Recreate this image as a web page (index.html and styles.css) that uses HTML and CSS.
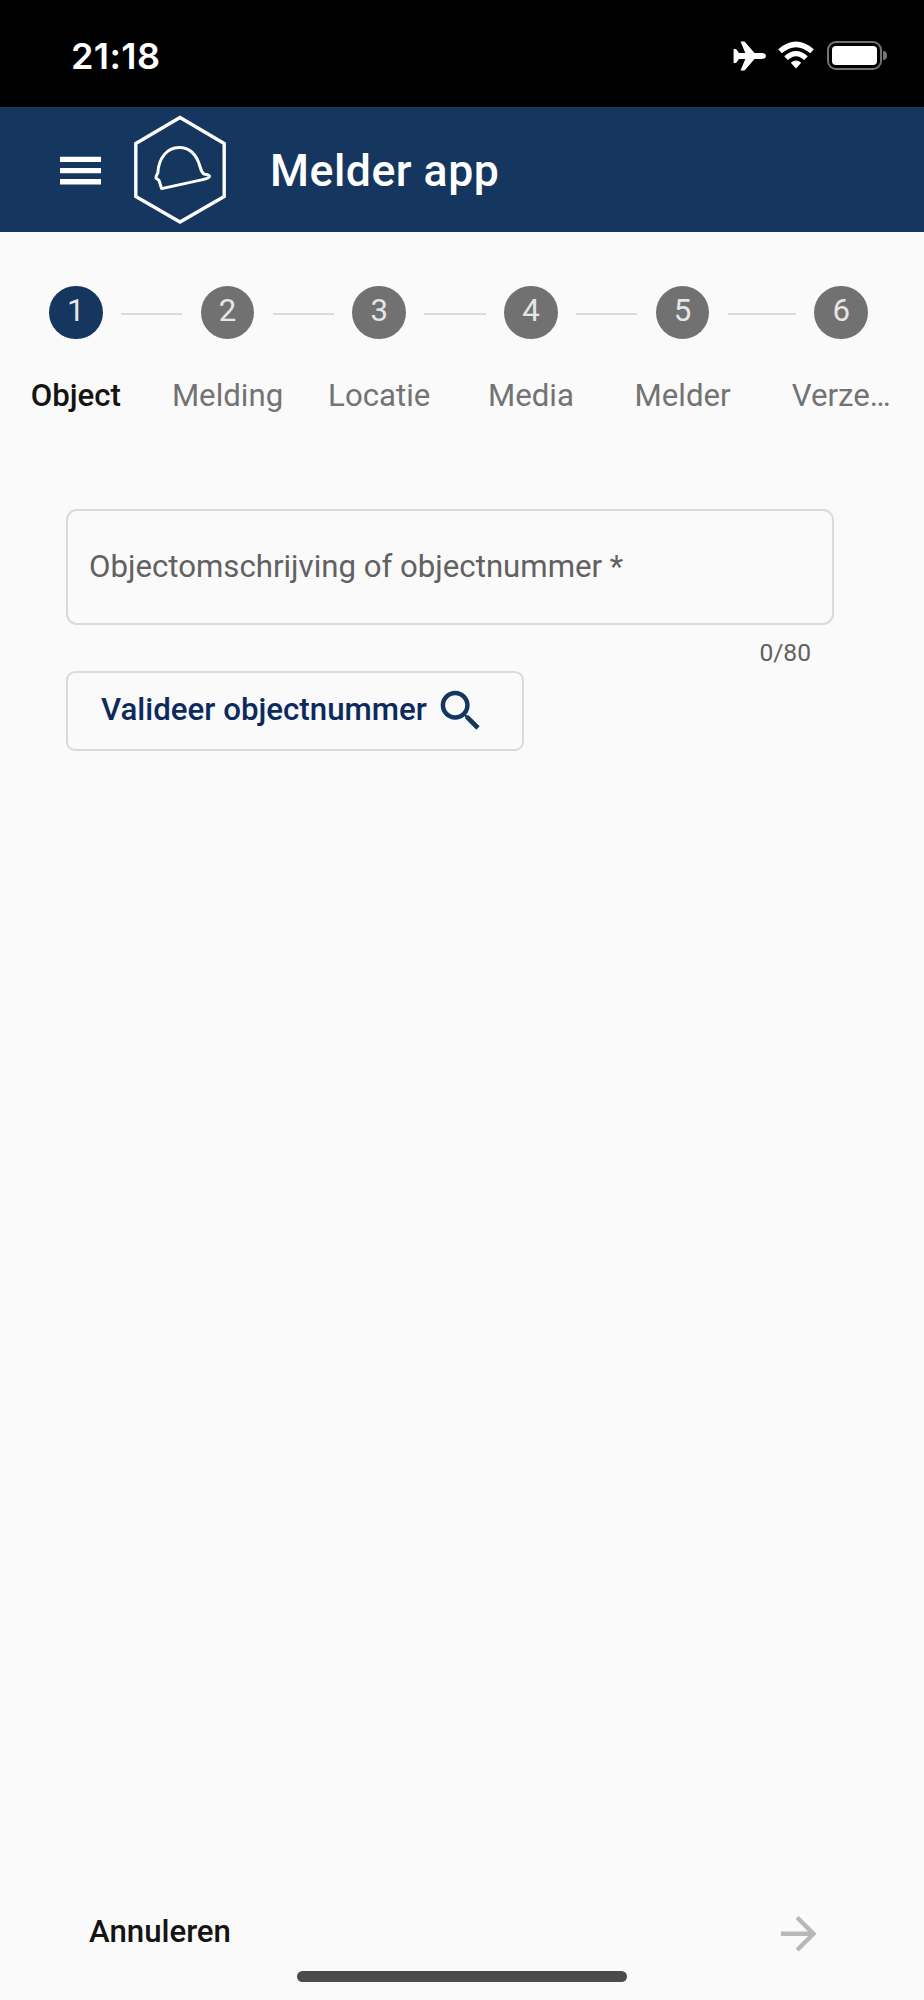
FILE: index.html
```html
<!DOCTYPE html>
<html lang="nl">
<head>
    <meta charset="UTF-8">
    <title>Melder app</title>
    <link rel="stylesheet" href="styles.css">
</head>
<body>
<div class="statusbar">
    <span class="time">21:18</span>
    <div class="status-icons">
        <svg class="plane" viewBox="0 0 34 30"><path d="M33 15c0-2-2-3-5-3h-6.500L12.500 1.500C12 1 11.500.6 10.800.6H7.500L12.300 12H6L3 8H.6v14H3l3-4h6.300L7.500 29.400h3.300c.7 0 1.200-.4 1.700-.9L21.500 18H28c3 0 5-1 5-3z"/></svg>
        <svg class="wifi" viewBox="0 0 36 28">
            <path d="M2 10.300Q18-3.500 34 10.300" fill="none" stroke="#fff" stroke-width="5.400"/>
            <path d="M8 17.200Q18 8 28 17.200" fill="none" stroke="#fff" stroke-width="5.200"/>
            <path d="M12.800 21.700Q18 17.400 23.200 21.700L18 27.500z"/>
        </svg>
        <div class="battery"><div class="level"></div></div>
        <div class="battery-tip"></div>
    </div>
</div>

<div class="header">
    <svg class="menu" viewBox="0 0 42 30"><path d="M0 .7h41v5.300H0zM0 11.900h41v5.300H0zM0 23.100h41v5.300H0z"/></svg>
    <svg class="logo" viewBox="0 0 94 110">
        <path d="M47 3.500l44.200 26v53L47 108 2.800 82.500v-53z" stroke-width="3.400"/>
        <path d="M28.600 74.600l40-8.700c3.500-.7 7-1.500 7.700-3 .6-1.600-1.800-2.500-4.500-2.600-2.700-.7-3.500-3.500-4.800-7.800C63.500 40.500 56 33.600 46 33.600c-12.200 0-20.500 11-21.200 25.400-1.300 2-2.200 3.600-1.700 5.200.4 1.200 2.200.8 3 2.500z" stroke-width="3" stroke-linejoin="round"/>
    </svg>
    <h1>Melder app</h1>
</div>

<div class="stepper">
    <div class="step active">
        <div class="track"><i></i><b>1</b><i></i></div>
        <div class="label">Object</div>
    </div>
    <div class="step">
        <div class="track"><i></i><b>2</b><i></i></div>
        <div class="label">Melding</div>
    </div>
    <div class="step">
        <div class="track"><i></i><b>3</b><i></i></div>
        <div class="label">Locatie</div>
    </div>
    <div class="step">
        <div class="track"><i></i><b>4</b><i></i></div>
        <div class="label">Media</div>
    </div>
    <div class="step">
        <div class="track"><i></i><b>5</b><i></i></div>
        <div class="label">Melder</div>
    </div>
    <div class="step">
        <div class="track"><i></i><b>6</b><i></i></div>
        <div class="label">Verze…</div>
    </div>
</div>

<div class="form">
    <div class="field"><span>Objectomschrijving of objectnummer *</span></div>
    <div class="counter">0/80</div>
    <button class="validate">
        <span>Valideer objectnummer</span>
        <svg viewBox="0 0 24 24"><path d="M15.500 14h-.79l-.28-.27C15.410 12.590 16 11.110 16 9.500 16 5.910 13.090 3 9.500 3S3 5.910 3 9.500 5.910 16 9.500 16c1.610 0 3.090-.59 4.230-1.570l.27.28v.79l5 4.990L20.490 19l-4.990-5zm-6 0C7.010 14 5 11.990 5 9.500S7.010 5 9.500 5 14 7.010 14 9.500 11.990 14 9.500 14z"/></svg>
    </button>
</div>

<div class="footer">
    <span class="cancel">Annuleren</span>
    <svg class="next" viewBox="0 0 24 24"><path d="M12 4l-1.410 1.410L16.170 11H4v2h12.170l-5.580 5.590L12 20l8-8z"/></svg>
</div>
<div class="home"></div>
</body>
</html>
```
FILE: styles.css
```css
* {
    margin: 0;
    padding: 0;
    box-sizing: border-box;
}

body {
    height: 2000px;
    display: flex;
    flex-direction: column;
    overflow: hidden;
    background-color: #fafafa;
    font-family: Roboto, "Liberation Sans", sans-serif;
    font-size: 31.2px;
}

svg {
    display: block;
    flex: none;
}

.statusbar {
    height: 107px;
    padding: 4px 37px 0 71px;
    display: flex;
    align-items: center;
    justify-content: space-between;
    background-color: #000;
    color: #fff;
}

.time {
    font-family: Inter, sans-serif;
    font-size: 36px;
    font-weight: 600;
    letter-spacing: 0.4px;
}

.status-icons {
    display: flex;
    align-items: center;
    fill: #fff;
}

.plane {
    width: 34px;
    height: 30px;
    margin-right: 11px;
}

.wifi {
    width: 36px;
    height: 28px;
    margin: -1px 13px 0 0;
}

.battery {
    width: 55px;
    height: 29px;
    padding: 3px;
    border: 2px solid #737373;
    border-radius: 9px;
}

.level {
    height: 100%;
    border-radius: 4px;
    background-color: #fff;
}

.battery-tip {
    width: 4px;
    height: 9px;
    margin-left: 1px;
    border-radius: 0 4px 4px 0;
    background-color: #737373;
}

.header {
    height: 125px;
    padding-left: 60px;
    display: flex;
    align-items: center;
    background-color: #14365f;
    color: #fff;
}

.menu {
    width: 42px;
    height: 30px;
    margin-top: 2px;
    fill: #fff;
}

.logo {
    width: 94px;
    height: 110px;
    margin: -1px 0 0 31px;
    fill: none;
    stroke: #fff;
}

.header h1 {
    margin: 2px 0 0 43px;
    font-size: 44.6px;
    font-weight: 500;
    letter-spacing: 0.5px;
}

.stepper {
    display: flex;
    padding-top: 53.5px;
}

.step {
    width: 151.7px;
    color: #737373;
    text-align: center;
}

.step:last-child {
    flex: 1;
}

.track {
    height: 54px;
    display: flex;
    align-items: center;
    gap: 18.5px;
}

.track i {
    flex: 1;
    height: 2px;
    margin-top: 2px;
    background-color: #dadada;
}

.step:first-child i:first-child,
.step:last-child i:last-child {
    visibility: hidden;
}

.track b {
    width: 53.5px;
    height: 53.5px;
    border-radius: 50%;
    background-color: #717171;
    color: #e6e6e6;
    font-weight: 400;
    line-height: 50px;
}

.label {
    margin-top: 37px;
    line-height: 38px;
}

.active b {
    background-color: #14365f;
}

.active .label {
    color: #141414;
    font-weight: 500;
}

.form {
    padding: 94px 90px 0 66px;
    flex: 1;
}

.field {
    height: 116px;
    padding: 0 21px;
    border: 2px solid #dadada;
    border-radius: 11px;
    color: #616161;
    line-height: 112px;
}

.counter {
    height: 46px;
    padding: 10px 23px 0 0;
    color: #616161;
    font-size: 24.6px;
    line-height: 36px;
    text-align: right;
}

.validate {
    width: 458px;
    height: 80px;
    padding-left: 33px;
    display: flex;
    align-items: center;
    border: 2px solid #dadada;
    border-radius: 9px;
    background: none;
    color: #0c2a5e;
    font: 500 31.25px Roboto, sans-serif;
}

.validate span {
    margin-top: -3px;
}

.validate svg {
    width: 53.5px;
    height: 53.5px;
    margin: 1px 0 0 7px;
    fill: #14365f;
}

.footer {
    height: 132px;
    padding: 0 99px 0 89px;
    display: flex;
    align-items: center;
    justify-content: space-between;
    color: #141414;
    font-weight: 500;
}

.cancel {
    margin-top: -5px;
}

.next {
    width: 53.5px;
    height: 53.5px;
    fill: #b8b8b8;
}

/* home indicator lies over the bottom of the screen */
.home {
    position: absolute;
    left: 297px;
    top: 1971px;
    width: 330px;
    height: 11px;
    border-radius: 6px;
    background-color: #4b4b4b;
}
```
